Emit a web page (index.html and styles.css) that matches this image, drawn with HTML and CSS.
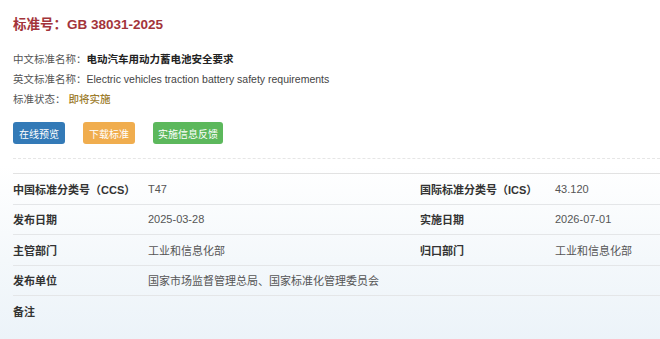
FILE: index.html
```html
<!DOCTYPE html>
<html lang="zh">
<head>
<meta charset="utf-8">
<link rel="stylesheet" href="styles.css">
</head>
<body>
<div class="page">
  <h1 class="title">标准号：GB 38031-2025</h1>
  <div class="info">
    <div class="line"><span class="key">中文标准名称：</span><span class="cn-name">电动汽车用动力蓄电池安全要求</span></div>
    <div class="line"><span class="key">英文标准名称：</span><span class="en-name">Electric vehicles traction battery safety requirements</span></div>
    <div class="line"><span class="key">标准状态：</span><span class="status">即将实施</span></div>
  </div>
  <div class="actions">
    <span class="btn btn-blue">在线预览</span>
    <span class="btn btn-orange">下载标准</span>
    <span class="btn btn-green">实施信息反馈</span>
  </div>
  <div class="dash"></div>
  <div class="table">
    <div class="row">
      <div class="lbl">中国标准分类号（CCS）</div><div class="val">T47</div>
      <div class="lbl">国际标准分类号（ICS）</div><div class="val">43.120</div>
    </div>
    <div class="row">
      <div class="lbl">发布日期</div><div class="val">2025-03-28</div>
      <div class="lbl">实施日期</div><div class="val">2026-07-01</div>
    </div>
    <div class="row">
      <div class="lbl">主管部门</div><div class="val">工业和信息化部</div>
      <div class="lbl">归口部门</div><div class="val">工业和信息化部</div>
    </div>
    <div class="row">
      <div class="lbl">发布单位</div><div class="val wide">国家市场监督管理总局、国家标准化管理委员会</div>
    </div>
    <div class="row last">
      <div class="lbl">备注</div><div class="val wide"></div>
    </div>
  </div>
</div>
</body>
</html>
```
FILE: styles.css
```css
html, body {
  margin: 0;
  padding: 0;
  height: 100%;
}
body {
  font-family: "Liberation Sans", Arial, "Noto Sans CJK SC", sans-serif;
  color: #333;
  background: linear-gradient(180deg, #ffffff 0px, #ffffff 165px, #f4f8fb 260px, #ecf3f9 339px);
  overflow: hidden;
}
.page {
  padding: 15px 0 0 13px;
}
.title {
  margin: 0;
  font-size: 13.5px;
  line-height: 20px;
  font-weight: bold;
  color: #a3343a;
}
.info {
  margin-top: 14px;
  font-size: 10.5px;
  line-height: 20px;
  color: #555;
}
.line {
  height: 20px;
  white-space: nowrap;
}
.cn-name {
  font-weight: bold;
  color: #222;
}
.en-name {
  color: #444;
}
.status {
  margin-left: 3px;
  font-weight: 500;
  color: #9c7c2c;
}
.actions {
  margin-top: 13px;
  display: flex;
  gap: 18px;
}
.btn {
  box-sizing: border-box;
  display: flex;
  align-items: center;
  justify-content: center;
  height: 22px;
  border-radius: 3px;
  font-size: 10px;
  color: #fff;
  white-space: nowrap;
}
.btn-blue { background: #337ab7; width: 52px; }
.btn-orange { background: #f0ad4e; width: 52px; }
.btn-green { background: #5cb85c; width: 70px; }
.dash {
  margin-top: 13.5px;
  height: 0;
  border-top: 1px dashed #e6e6e6;
}
.table {
  margin-top: 14.5px;
  border-top: 1px solid #e2e2e2;
}
.row {
  display: grid;
  grid-template-columns: 135px 272px 135px 1fr;
  align-items: center;
  box-sizing: border-box;
  height: 30.5px;
  border-bottom: 1px solid #e4e6e8;
  font-size: 11px;
}
.row.last {
  border-bottom: none;
}
.lbl {
  font-weight: bold;
  color: #333;
}
.val {
  color: #555;
}
.val.wide {
  grid-column: 2 / 5;
}
```
